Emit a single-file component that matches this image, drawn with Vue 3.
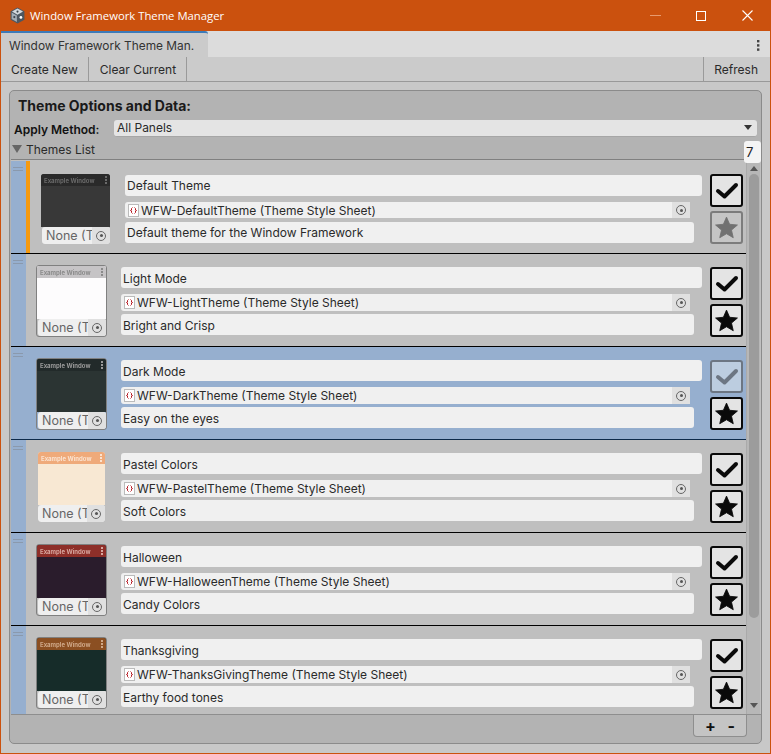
<template>
  <div class="window">
    <header class="titlebar">
      <svg class="app-icon" viewBox="1 0 14 16" width="15" height="17">
        <path d="M8 0.500 14.500 4v8L8 15.500 1.500 12V4z" fill="#4d5761" />
        <path d="M8 1.500 13.200 4.300 8 7.200 2.800 4.300z" fill="#d3d9de" />
        <path d="M2.500 5.200 7.400 8v6.200L2.500 11.400z" fill="#a3adb6" />
        <circle cx="8" cy="4.300" r="1" fill="#39424b" />
        <circle cx="5" cy="9.500" r="1" fill="#39424b" />
        <circle cx="11.200" cy="9.800" r="1.300" fill="#fff" />
      </svg>
      <span class="title">Window Framework Theme Manager</span>
      <div class="win-controls">
        <span class="ctl"><span class="min-line"></span></span>
        <span class="ctl"><span class="max-box"></span></span>
        <span class="ctl">
          <svg viewBox="0 0 11 11" width="11" height="11">
            <path d="M0.500 0.500 10.500 10.500M10.500 0.500 0.500 10.500" stroke="#fff" stroke-width="1.100" fill="none" />
          </svg>
        </span>
      </div>
    </header>

    <div class="body">
      <div class="tabbar">
        <div class="tab">Window Framework Theme Man.</div>
        <svg class="kebab" viewBox="0 0 3 11" width="3" height="11">
          <rect y="0" width="2.400" height="2.400" fill="#444" />
          <rect y="4.200" width="2.400" height="2.400" fill="#444" />
          <rect y="8.400" width="2.400" height="2.400" fill="#444" />
        </svg>
      </div>

      <div class="toolbar">
        <button class="tool">Create New</button>
        <button class="tool">Clear Current</button>
        <span class="spacer"></span>
        <button class="tool refresh">Refresh</button>
      </div>

      <section class="panel">
        <h2>Theme Options and Data:</h2>
        <div class="apply">
          <label>Apply Method:</label>
          <div class="dropdown">
            <span>All Panels</span>
            <span class="dd-arrow"></span>
          </div>
        </div>
        <div class="foldout">
          <span class="fold-arrow"></span>
          <span>Themes List</span>
        </div>

        <div class="list">
          <div class="rows">
            <div
              v-for="t in themes"
              :key="t.name"
              class="row"
              :class="{ first: t.active, selected: t.selected }"
            >
              <div class="handle"><i></i><i></i></div>
              <div v-if="t.active" class="stripe"></div>
              <div class="thumb" :class="t.skin">
                <div class="preview" :style="{ background: t.bg }">
                  <div class="preview-head" :style="{ background: t.head, color: t.ink }">
                    <span>Example Window</span>
                    <span class="dots"><i></i><i></i><i></i></span>
                  </div>
                </div>
                <div class="none-field">
                  <span class="none-text">None (T</span>
                  <span class="picker"><span class="target"></span></span>
                </div>
              </div>
              <div class="fields">
                <div class="field name">{{ t.name }}</div>
                <div class="field sheet">
                  <svg class="sheet-icon" viewBox="0 0 11 13" width="11" height="13">
                    <rect x="0.500" y="0.500" width="10" height="12" fill="#fff" stroke="#bbb" />
                    <path d="M4.500 3.500 3.500 4.500v1.500L2.500 6.500 3.500 7v1.500l1 1M6.500 3.500l1 1v1.500l1 .5-1 .5v1.500l-1 1" stroke="#b5121b" fill="none" />
                  </svg>
                  <span class="sheet-text">{{ t.sheet }} (Theme Style Sheet)</span>
                  <span class="picker"><span class="target"></span></span>
                </div>
                <div class="field desc">{{ t.desc }}</div>
              </div>
              <div class="actions">
                <button class="icon-btn" :class="{ off: t.selected }">
                  <svg viewBox="0 0 29 29" width="29" height="29">
                    <path d="M6 15 12.500 20.500 24 9" fill="none" stroke="currentColor" stroke-width="4" stroke-linecap="round" stroke-linejoin="round" />
                  </svg>
                </button>
                <button class="icon-btn" :class="{ off: t.active }">
                  <svg viewBox="0 0 24 24" width="25" height="25">
                    <path d="M12 2 15 8.900 22.500 9.600 16.800 14.500 18.500 21.800 12 18 5.500 21.800 7.200 14.500 1.500 9.600 9 8.900z" fill="currentColor" stroke="currentColor" stroke-width="0.800" stroke-linejoin="round" />
                  </svg>
                </button>
              </div>
            </div>
          </div>
          <div class="scrollbar">
            <span class="sb-up"></span>
            <span class="sb-thumb"></span>
            <span class="sb-down"></span>
          </div>
        </div>

        <div class="footer">
          <div class="add-remove">
            <span>+</span>
            <span>-</span>
          </div>
        </div>

        <div class="count">7</div>
      </section>
    </div>
  </div>
</template>

<script setup>
const themes = [
  { name: 'Default Theme', sheet: 'WFW-DefaultTheme', desc: 'Default theme for the Window Framework', head: '#2a2a2a', bg: '#383838', ink: '#6a6a6a', skin: 'plain', active: true },
  { name: 'Light Mode', sheet: 'WFW-LightTheme', desc: 'Bright and Crisp', head: '#c6c4c6', bg: '#fdfcfd', ink: '#8a8a8a', skin: 'framed' },
  { name: 'Dark Mode', sheet: 'WFW-DarkTheme', desc: 'Easy on the eyes', head: '#222a2a', bg: '#2b3433', ink: '#9a9a9a', skin: 'framed', selected: true },
  { name: 'Pastel Colors', sheet: 'WFW-PastelTheme', desc: 'Soft Colors', head: '#efaa7a', bg: '#f8e8d3', ink: '#fbe3d0', skin: 'small' },
  { name: 'Halloween', sheet: 'WFW-HalloweenTheme', desc: 'Candy Colors', head: '#8e2f29', bg: '#2a1c2c', ink: '#d8a8a0', skin: 'framed' },
  { name: 'Thanksgiving', sheet: 'WFW-ThanksGivingTheme', desc: 'Earthy food tones', head: '#8b4f22', bg: '#162c29', ink: '#cfa888', skin: 'framed' }
]
</script>

<style>
html, body {
  margin: 0;
  height: 100%;
  background: #c8c8c8;
}
</style>

<style scoped>
.window {
  width: 771px;
  height: 754px;
  box-sizing: border-box;
  display: flex;
  flex-direction: column;
  border: 1px solid #cb510e;
  border-top: 0;
  font-family: Inter, "Liberation Sans", sans-serif;
  font-size: 12px;
  color: #101010;
  overflow: hidden;
}

.titlebar {
  height: 31px;
  flex: none;
  background: #cb510e;
  display: flex;
  align-items: center;
  padding-left: 9px;
  color: #fff;
}

.app-icon {
  margin-right: 5px;
}

.title {
  font-family: "Open Sans", "Noto Sans", sans-serif;
  font-size: 11.3px;
}

.win-controls {
  margin-left: auto;
  display: flex;
}

.ctl {
  width: 46px;
  height: 31px;
  display: flex;
  align-items: center;
  justify-content: center;
}

.min-line {
  width: 11px;
  height: 1px;
  background: #e89a6e;
}

.max-box {
  width: 8px;
  height: 8px;
  border: 1px solid #fff;
}

.body {
  flex: 1;
  min-height: 0;
  display: flex;
  flex-direction: column;
  background: #c8c8c8;
}

.tabbar {
  height: 26px;
  flex: none;
  background: #dcdcdc;
  display: flex;
  align-items: stretch;
}

.tab {
  width: 207px;
  box-sizing: border-box;
  background: #cbcbcb;
  border-top: 2px solid #3d7ab8;
  border-top-right-radius: 3px;
  padding: 5px 0 0 8px;
  font-size: 11.9px;
  color: #333;
  white-space: nowrap;
}

.kebab {
  margin: 9px 10px 0 auto;
}

.toolbar {
  height: 25px;
  flex: none;
  display: flex;
  border-bottom: 1px solid #999;
  box-sizing: border-box;
  background: #cbcbcb;
}

.tool {
  font: inherit;
  color: #2a2a2a;
  background: none;
  border: 0;
  border-right: 1px solid #9a9a9a;
  padding: 0 10px 0 11px;
  height: 24px;
}

.tool:first-child {
  padding-left: 10px;
}

.spacer {
  flex: 1;
}

.tool.refresh {
  border-right: 0;
  border-left: 1px solid #9a9a9a;
  padding: 0 12px 0 10px;
}

.panel {
  position: relative;
  flex: 1;
  min-height: 0;
  margin: 8px 8px 9px 8px;
  background: #b3b3b3;
  border: 1px solid #8b8b8b;
  border-radius: 5px;
  display: flex;
  flex-direction: column;
  color: #111;
}

h2 {
  margin: 0;
  font-size: 14px;
  font-weight: 700;
  padding: 6px 0 0 8px;
  line-height: 17px;
  color: #1a1a1a;
}

.apply {
  display: flex;
  align-items: center;
  margin-top: 5px;
  padding-left: 4px;
  height: 18px;
}

.apply label {
  width: 100px;
  font-weight: 600;
  padding-top: 2px;
}

.dropdown {
  width: 643px;
  height: 17px;
  box-sizing: border-box;
  background: #e4e4e4;
  border-radius: 3px;
  border-bottom: 1px solid #a6a6a6;
  padding: 0 3px;
  display: flex;
  align-items: center;
  justify-content: space-between;
  color: #2a2a2a;
}

.dd-arrow {
  width: 0;
  height: 0;
  border-left: 4px solid transparent;
  border-right: 4px solid transparent;
  border-top: 5px solid #333;
  margin-right: 2px;
}

.foldout {
  display: flex;
  align-items: center;
  height: 16px;
  margin-top: 4px;
  padding-left: 2px;
  gap: 4px;
  color: #2a2a2a;
}

.fold-arrow {
  width: 0;
  height: 0;
  border-left: 5px solid transparent;
  border-right: 5px solid transparent;
  border-top: 8px solid #666;
}

.list {
  margin: 2px 0 0 1px;
  flex: 1;
  min-height: 0;
  display: flex;
  border-top: 1px solid #808080;
  border-bottom: 1px solid #8e8e8e;
  background: #c0c0c0;
}

.rows {
  flex: 1;
  min-width: 0;
  overflow: hidden;
  padding-top: 1px;
}

.row {
  height: 93px;
  box-sizing: border-box;
  display: flex;
  align-items: flex-start;
  position: relative;
  border-bottom: 1px solid #000;
  background: #bfbfbf;
}

.row.selected {
  background: #96afcf;
  border-bottom-color: #0d2a4a;
}

.handle {
  width: 15px;
  height: 100%;
  flex: none;
  background: #96afcf;
  padding: 6px 2px 0;
  box-sizing: border-box;
}

.handle i {
  display: block;
  height: 1px;
  width: 10px;
  background: #8a99ad;
  margin-bottom: 2px;
}

.stripe {
  width: 4px;
  height: 100%;
  flex: none;
  background: #f59a11;
}

.thumb {
  width: 71px;
  height: 72px;
  margin: 11px 14px 0 10px;
  flex: none;
  display: flex;
  flex-direction: column;
  border-radius: 3px;
  overflow: hidden;
  box-sizing: border-box;
}

.thumb.plain {
  width: 69px;
  height: 70px;
  margin: 13px 15px 0 11px;
}

.thumb.small {
  width: 67px;
  height: 70px;
  margin: 12px 16px 0 12px;
}

.thumb.framed {
  border: 1px solid #808080;
}

.preview {
  flex: 1;
  min-height: 0;
}

.preview-head {
  height: 12px;
  display: flex;
  align-items: center;
  justify-content: space-between;
  padding: 0 3px;
  font-size: 6px;
  font-weight: 700;
  white-space: nowrap;
  overflow: hidden;
  filter: blur(0.3px);
}

.dots i {
  display: block;
  width: 2px;
  height: 2px;
  margin-bottom: 1px;
  background: currentColor;
}

.none-field {
  height: 17px;
  flex: none;
  display: flex;
  align-items: center;
  background: #efefef;
  border-radius: 3px;
  margin-left: 1px;
  color: #666;
  font-size: 12.5px;
  overflow: hidden;
}

.small .none-field {
  margin-left: 0;
}

.none-text {
  flex: 1;
  min-width: 0;
  white-space: nowrap;
  padding-left: 4px;
}

.picker {
  width: 18px;
  height: 100%;
  flex: none;
  background: #e0e0e0;
  display: flex;
  align-items: center;
  justify-content: center;
}

.target {
  width: 8px;
  height: 8px;
  border: 1px solid #666;
  border-radius: 50%;
  position: relative;
  display: block;
}

.target::after {
  content: "";
  position: absolute;
  left: 2.500px;
  top: 2.500px;
  width: 3px;
  height: 3px;
  border-radius: 50%;
  background: #555;
}

.fields {
  width: 581px;
  flex: none;
  display: flex;
  flex-direction: column;
  padding-top: 13px;
  color: #2a2a2a;
}

.first .fields {
  width: 577px;
  padding-top: 14px;
}

.field {
  box-sizing: border-box;
  background: #f0f0f0;
  border-radius: 3px;
  display: flex;
  align-items: center;
  white-space: nowrap;
  padding-left: 2px;
}

.name,
.desc {
  height: 21px;
  padding-top: 1px;
}

.first .name,
.first .desc {
  padding-top: 0;
}

.sheet {
  height: 17px;
  width: 569px;
  margin-top: 6px;
  padding-left: 3px;
}

.first .sheet {
  width: 565px;
  height: 16px;
}

.first .desc {
  margin-top: 4px;
}

.sheet-icon {
  flex: none;
  margin-right: 2px;
}

.sheet-text {
  flex: 1;
}

.desc {
  width: 573px;
  margin-top: 3px;
}

.first .desc {
  width: 569px;
}

.actions {
  position: absolute;
  right: 3px;
  top: 13px;
  display: flex;
  flex-direction: column;
  gap: 4px;
}

.icon-btn {
  width: 33px;
  height: 33px;
  box-sizing: border-box;
  padding: 0;
  background: #e4e4e4;
  border: 2px solid #0a0a0a;
  border-radius: 3px;
  color: #0a0a0a;
  display: flex;
  align-items: center;
  justify-content: center;
}

.icon-btn.off {
  background: #c5c5c5;
  border-color: #7c7c7c;
  color: #717171;
}

.selected .icon-btn.off {
  background: #bccde0;
  border-color: #6c7683;
  color: #6c7683;
}

.scrollbar {
  width: 14px;
  flex: none;
  background: #b7b7b7;
  display: flex;
  flex-direction: column;
  align-items: center;
  padding: 6px 0;
  box-sizing: border-box;
  border-left: 1px solid #aaa;
  margin-right: 1px;
}

.sb-up {
  width: 0;
  height: 0;
  border-left: 4px solid transparent;
  border-right: 4px solid transparent;
  border-bottom: 5px solid #555;
}

.sb-down {
  width: 0;
  height: 0;
  border-left: 4px solid transparent;
  border-right: 4px solid transparent;
  border-top: 5px solid #555;
}

.sb-thumb {
  width: 10px;
  flex: 1;
  background: #9c9c9c;
  border-radius: 5px;
  margin: 3px 0 85px;
}

.footer {
  height: 28px;
  flex: none;
  display: flex;
  justify-content: flex-end;
  padding-right: 14px;
}

.add-remove {
  width: 54px;
  height: 22px;
  box-sizing: border-box;
  background: #c4c4c4;
  border: 1px solid #8e8e8e;
  border-top: 0;
  border-radius: 0 0 4px 4px;
  display: flex;
  justify-content: space-around;
  align-items: center;
  font-weight: 700;
  font-size: 16px;
  padding: 0 5px;
  color: #111;
}

.count {
  position: absolute;
  left: 734px;
  top: 50px;
  width: 17px;
  height: 22px;
  background: #f4f4f4;
  border-radius: 3px;
  font-size: 13px;
  line-height: 22px;
  padding-left: 2px;
  box-sizing: border-box;
  color: #222;
}
</style>
